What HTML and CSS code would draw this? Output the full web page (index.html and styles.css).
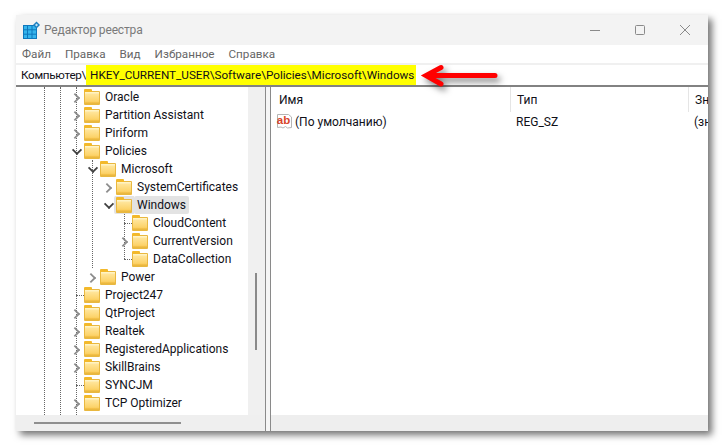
FILE: index.html
```html
<!DOCTYPE html>
<html lang="ru">
<head>
<meta charset="utf-8">
<title>Редактор реестра</title>
<link rel="stylesheet" href="styles.css">
</head>
<body>
<div class="window">
  <header class="titlebar">
    <svg class="app-icon" width="18" height="18" viewBox="0 0 18 18">
      <rect x="0.500" y="4.500" width="13" height="13" fill="#35b4ec" stroke="#0f78bd"/>
      <path d="M4.500 4v14M9 4v14M0 8.800h14M0 13.200h14" stroke="#0f78bd" stroke-width="1"/>
      <path d="M13.500 0.500l3.500 3.500-3.500 3.500-3.500-3.500z" fill="#1c7fc0"/>
      <path d="M13.500 2.500l1.500 1.500-1.500 1.500-1.500-1.500z" fill="#bfe6fa"/>
    </svg>
    <span class="title">Редактор реестра</span>
    <div class="controls">
      <svg width="12" height="12" viewBox="0 0 12 12"><path d="M1 6.500h10" stroke="#8a8a8a" stroke-width="1"/></svg>
      <svg width="12" height="12" viewBox="0 0 12 12"><rect x="1.500" y="1.500" width="9" height="9" rx="1" fill="none" stroke="#8a8a8a"/></svg>
      <svg width="12" height="12" viewBox="0 0 12 12"><path d="M1 1l10 10M11 1L1 11" stroke="#8a8a8a" stroke-width="1"/></svg>
    </div>
  </header>
  <nav class="menu">
    <span>Файл</span><span>Правка</span><span>Вид</span><span>Избранное</span><span>Справка</span>
  </nav>
  <div class="address"><span class="root">Компьютер\</span><mark>HKEY_CURRENT_USER\Software\Policies\Microsoft\Windows</mark></div>
  <div class="main">
    <div class="tree-pane">
      <div class="tree-col">
        <div class="tree">
          <i class="guide g1"></i><i class="guide g2"></i><i class="guide g3"></i><i class="guide g4"></i><i class="guide g5"></i>
          <div class="row l0"><b class="tw closed"></b><b class="folder"></b><span>Oracle</span></div>
          <div class="row l0"><b class="tw closed"></b><b class="folder"></b><span>Partition Assistant</span></div>
          <div class="row l0"><b class="tw closed"></b><b class="folder"></b><span>Piriform</span></div>
          <div class="row l0"><b class="tw open"></b><b class="folder"></b><span>Policies</span></div>
          <div class="row l1"><b class="tw open"></b><b class="folder"></b><span>Microsoft</span></div>
          <div class="row l2"><b class="tw closed"></b><b class="folder"></b><span>SystemCertificates</span></div>
          <div class="row l2"><b class="tw open"></b><b class="folder"></b><span class="sel">Windows</span></div>
          <div class="row l3"><b class="tw leaf"></b><b class="folder"></b><span>CloudContent</span></div>
          <div class="row l3"><b class="tw closed"></b><b class="folder"></b><span>CurrentVersion</span></div>
          <div class="row l3"><b class="tw leaf"></b><b class="folder"></b><span>DataCollection</span></div>
          <div class="row l1"><b class="tw closed"></b><b class="folder"></b><span>Power</span></div>
          <div class="row l0"><b class="tw leaf"></b><b class="folder"></b><span>Project247</span></div>
          <div class="row l0"><b class="tw closed"></b><b class="folder"></b><span>QtProject</span></div>
          <div class="row l0"><b class="tw closed"></b><b class="folder"></b><span>Realtek</span></div>
          <div class="row l0"><b class="tw closed"></b><b class="folder"></b><span>RegisteredApplications</span></div>
          <div class="row l0"><b class="tw closed"></b><b class="folder"></b><span>SkillBrains</span></div>
          <div class="row l0"><b class="tw leaf"></b><b class="folder"></b><span>SYNCJM</span></div>
          <div class="row l0"><b class="tw closed"></b><b class="folder"></b><span>TCP Optimizer</span></div>
        </div>
        <div class="vscroll"><div class="vthumb"></div></div>
      </div>
      <div class="hscroll"><div class="hthumb"></div></div>
    </div>
    <div class="splitter"></div>
    <div class="list-pane">
      <div class="list">
        <div class="list-head">
          <span class="col-name">Имя</span><span class="col-type">Тип</span><span class="col-val">Зн</span>
        </div>
        <div class="list-row">
          <span class="col-name">
            <svg class="ab" width="17" height="17" viewBox="0 0 17 17">
              <path d="M1.500 1.500h11l3 2.500v10.500l-4 .5-2-1.500-2.500 1.500-2-1-3.500.5z" fill="#fff" stroke="#b5b5b5"/>
              <text x="7.500" y="10.500" class="ab-text">ab</text>
            </svg>
            (По умолчанию)
          </span>
          <span class="col-type">REG_SZ</span><span class="col-val">(зн</span>
        </div>
      </div>
      <div class="list-foot"></div>
    </div>
  </div>
</div>
<svg class="arrow" width="86" height="30" viewBox="0 0 86 30">
  <path d="M77 14.500H9M23 6.500L8 14.500L23 23" fill="none" stroke="#f00" stroke-width="5" stroke-linecap="round" stroke-linejoin="miter"/>
</svg>
</body>
</html>
```
FILE: styles.css
```css
html, body { margin: 0; height: 100%; background: #fff; overflow: hidden; }
body { padding: 15px 0 0 16px; box-sizing: border-box; position: relative; font: 12px Roboto, "Open Sans", sans-serif; color: #101018; }
.window { width: 692px; height: 416px; display: flex; flex-direction: column; background: #fff; box-shadow: 4px 4px 7px rgba(0,0,0,.55); }
.titlebar { height: 30px; background: #f3f3f3; display: flex; align-items: center; padding-left: 7px; flex: none; }
.app-icon { flex: none; }
.title { margin-left: 3px; color: #7a7a7a; font-size: 12px; letter-spacing: -.15px; }
.controls { margin-left: auto; display: flex; gap: 33px; padding-right: 17px; }
.menu { height: 18px; flex: none; display: flex; gap: 14px; align-items: center; padding-left: 6px; color: #666; font-size: 11.700px; border-bottom: 2px solid #f0f0f0; }
.address { height: 20px; flex: none; display: flex; align-items: center; padding-left: 5px; font-size: 11.700px; border-bottom: 2px solid #828282; box-sizing: content-box; }
.root { letter-spacing: -.3px; }
.address mark { background: #ff0; color: inherit; height: 20px; line-height: 20px; padding: 0 2px 0 4px; }
.main { flex: 1; display: flex; min-height: 0; }
.tree-pane { width: 249px; display: flex; flex-direction: column; flex: none; }
.tree-col { flex: 1; display: flex; min-height: 0; }
.tree { position: relative; flex: 1; background: #fff; overflow: hidden; padding-top: 1px; }
.vscroll { width: 17px; background: #f0f0f0; position: relative; flex: none; }
.vthumb { width: 2px; height: 77px; background: #8a8a8a; margin: 186px 0 0 7px; }
.hscroll { height: 16px; background: #efefef; flex: none; display: flex; align-items: center; }
.hthumb { width: 147px; height: 2px; background: #8f8f8f; margin: 0 0 0 18px; }
.splitter { width: 6px; flex: none; background: #f5f5f5; border-left: 1px solid #8a8a8a; border-right: 1px solid #8a8a8a; box-sizing: border-box; }
.list-pane { flex: 1; display: flex; flex-direction: column; min-width: 0; }
.list { flex: 1; overflow: hidden; background: #fff; }
.list-foot { height: 16px; background: #eee; flex: none; }
.list-head, .list-row { display: flex; align-items: center; }
.list-head { height: 25px; }
.list-row { height: 19px; }
.col-name { width: 239px; padding-left: 8px; box-sizing: border-box; flex: none; display: flex; align-items: center; gap: 2px; white-space: nowrap; }
.col-type { width: 178px; flex: none; padding-left: 6px; box-sizing: border-box; }
.col-val { padding-left: 6px; overflow: hidden; }
.list-head span { height: 25px; line-height: 26px; }
.list-head .col-type, .list-head .col-val { border-left: 1px solid #e5e5e5; }
.ab { flex: none; margin-left: -3px; }
.ab-text { font: bold 11.500px "Liberation Sans", sans-serif; fill: #d8442a; text-anchor: middle; }
.row { height: 18px; display: flex; align-items: center; position: relative; white-space: nowrap; }
.row span { margin-left: 2px; padding: 0 3px; line-height: 18px; position: relative; }
.l0 { padding-left: 52px; }
.l1 { padding-left: 68px; }
.l2 { padding-left: 84px; }
.l3 { padding-left: 100px; }
.sel { background: #e3e3e3; border-radius: 2px; }
.row:has(.sel)::before { content: ""; position: absolute; left: 98px; width: 20px; top: 0; bottom: 0; background: #e3e3e3; border-radius: 2px 0 0 2px; }
.tw { width: 16px; height: 18px; flex: none; position: relative; }
.tw.closed::before { content: ""; position: absolute; left: 3px; top: 6px; width: 6px; height: 6px; border: solid #8c8c8c; border-width: 2px 2px 0 0; transform: rotate(45deg) scale(.9); }
.tw.open::before { content: ""; position: absolute; left: 5px; top: 4px; width: 6px; height: 6px; border: solid #404040; border-width: 0 2px 2px 0; transform: rotate(45deg) scale(.9); }
.tw.leaf::before { content: ""; position: absolute; left: 8px; right: 0; top: 9px; border-top: 1px dotted #666; }
.folder { width: 16px; height: 14px; flex: none; position: relative; background: linear-gradient(#fff3c4 0 1px, #ffe59a 2px, #fcd268 85%, #f0b93c 100%); border-radius: 1px; margin-top: 2px; box-sizing: border-box; border: solid #e9b840; border-width: 1px 1px 2px 1px; }
.folder::before { content: ""; position: absolute; left: -1px; top: -3px; width: 8px; height: 3px; background: #f3b92b; border-radius: 1px 1px 0 0; }
.guide { position: absolute; width: 0; border-left: 1px dotted #666; }
.g1 { left: 28px; top: 0; bottom: 0; }
.g2 { left: 44px; top: 0; bottom: 0; }
.g3 { left: 60px; top: 0; bottom: 0; }
.g4 { left: 76px; top: 73px; height: 108px; }
.g5 { left: 108px; top: 127px; height: 45px; }
.arrow { position: absolute; left: 418px; top: 61px; filter: drop-shadow(3px 4px 3px rgba(0,0,0,.5)); }
```
